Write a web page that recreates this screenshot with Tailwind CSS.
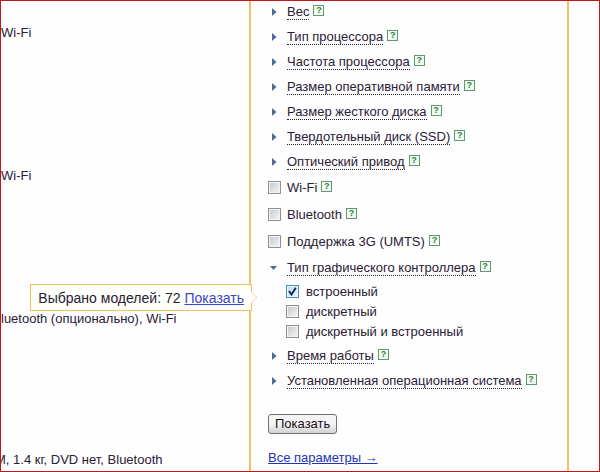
<!DOCTYPE html>
<html lang="ru">
<head>
<meta charset="utf-8">
<meta name="viewport" content="width=device-width, initial-scale=1">
<title>Подбор по параметрам</title>
<script src="https://cdn.jsdelivr.net/npm/@tailwindcss/browser@4"></script>
</head>
<body class="bg-white">
<div id="page" class="flex min-h-screen overflow-hidden border border-[#c4161c] bg-[#fefefe] font-['Liberation_Sans',Arial,sans-serif] text-[13px] leading-[15px] text-[#2a2035]">
  <main class="min-w-0 flex-1 overflow-hidden whitespace-nowrap pt-6">
    <p class="h-[143px]">Wi-Fi</p>
    <p class="h-[143px]">Wi-Fi</p>
    <p class="h-[141px]">luetooth (опционально), Wi-Fi</p>
    <p class="-ml-1.5">М, 1.4 кг, DVD нет, Bluetooth</p>
  </main>

  <aside class="w-80 shrink-0 border-x-2 border-[#f5c063] pl-[17px] whitespace-nowrap">
    <ul id="filters" class="-mt-0.5"></ul>
    <button type="button" class="mt-[21px] block h-5 rounded-[3px] border border-[#707070] bg-linear-to-b from-[#f4f4f4] from-50% to-[#d2d2d2] px-1.5 leading-4 text-[#1a1020]">Показать</button>
    <a href="#all" class="mt-4 inline-block text-[#2233b8] underline">Все параметры →</a>
  </aside>
  <div class="w-[30px] shrink-0"></div>
</div>

<template id="help">
  <button type="button" aria-label="Справка" class="mb-0.5 grid size-[11px] shrink-0 place-items-center border border-[#5f9a6c] bg-[#f3faf3] text-[9px] leading-[9px] font-bold text-[#2f7d42]">?</button>
</template>

<template id="section">
  <li class="flex h-[25px] items-center gap-1">
    <button type="button" class="flex items-center" aria-expanded="false">
      <svg class="w-[19px] shrink-0" height="8" viewBox="0 0 19 8" aria-hidden="true"><path d="M4 0L8.500 4L4 8Z" fill="#4d6a94"/></svg>
      <span class="border-b border-dotted border-[#2a2035]" data-label></span>
    </button>
  </li>
</template>

<template id="open-section">
  <li>
    <div class="flex h-[25px] items-center gap-1">
      <button type="button" class="flex items-center" aria-expanded="true">
        <svg class="w-[19px] shrink-0" height="8" viewBox="0 0 19 8" aria-hidden="true"><path d="M2 2H9L5.500 6Z" fill="#4d6a94"/></svg>
        <span class="border-b border-dotted border-[#2a2035]" data-label></span>
      </button>
    </div>
    <ul class="relative pt-px pb-0.5 pl-[18px]" data-options></ul>
  </li>
</template>

<template id="flag">
  <li class="flex h-[27px] items-center gap-1">
    <label class="flex items-center gap-1.5">
      <input type="checkbox" class="size-[13px] appearance-none border border-[#8e8f8f] bg-linear-to-br from-[#c4c8cc] to-[#f6f6f6] shadow-[inset_0_0_0_1px_#f4f4f4]">
      <span data-label></span>
    </label>
  </li>
</template>

<template id="option">
  <li class="flex h-5 items-center">
    <label class="flex items-center gap-[7px]">
      <span class="relative size-[13px]">
        <input type="checkbox" class="peer block size-[13px] appearance-none border border-[#8e8f8f] bg-linear-to-br from-[#c4c8cc] to-[#f6f6f6] shadow-[inset_0_0_0_1px_#f4f4f4] checked:border-[#4a90b8] checked:from-[#b8dff5] checked:to-[#e8f7ff]">
        <svg class="pointer-events-none absolute inset-0 hidden peer-checked:block" width="13" height="13" viewBox="0 0 13 13" aria-hidden="true"><path d="M3 6L5.500 9.500L9.800 2.800" fill="none" stroke="#14265c" stroke-width="2"/></svg>
      </span>
      <span data-label></span>
    </label>
  </li>
</template>

<template id="popup">
  <li class="absolute top-1 right-full z-10 mr-4 flex h-[27px] items-center gap-1 border border-[#f0c060] bg-[#fffffc] px-[7px] text-[14px] leading-4">
    <span>Выбрано моделей: 72</span>
    <a href="#show" class="text-[#3a45c8] underline">Показать</a>
    <svg class="absolute top-1.5 left-full" width="7" height="13" viewBox="0 0 7 13" aria-hidden="true"><path d="M0 0.500L6 6.500L0 12.500" fill="#fffffc" stroke="#f3cc94"/></svg>
  </li>
</template>

<script>
const items = [
  ['section', 'Вес'],
  ['section', 'Тип процессора'],
  ['section', 'Частота процессора'],
  ['section', 'Размер оперативной памяти'],
  ['section', 'Размер жесткого диска'],
  ['section', 'Твердотельный диск (SSD)'],
  ['section', 'Оптический привод'],
  ['flag', 'Wi-Fi'],
  ['flag', 'Bluetooth'],
  ['flag', 'Поддержка 3G (UMTS)'],
  ['open-section', 'Тип графического контроллера', ['встроенный', 'дискретный', 'дискретный и встроенный']],
  ['section', 'Время работы'],
  ['section', 'Установленная операционная система']
];
const make = id => document.getElementById(id).content.firstElementChild.cloneNode(true);
const list = document.getElementById('filters');
for (const [kind, label, options] of items) {
  const row = make(kind);
  row.querySelector('[data-label]').textContent = label;
  (kind === 'open-section' ? row.firstElementChild : row).append(make('help'));
  if (options) {
    const box = row.querySelector('[data-options]');
    options.forEach((text, i) => {
      const option = make('option');
      option.querySelector('[data-label]').textContent = text;
      option.querySelector('input').checked = i === 0;
      box.append(option);
    });
    box.append(make('popup'));
  }
  list.append(row);
}
</script>
</body>
</html>
